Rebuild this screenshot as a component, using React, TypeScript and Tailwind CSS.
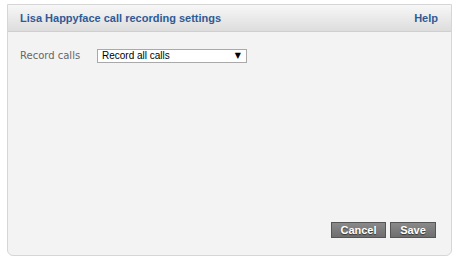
import React from 'react';

const App: React.FC = () => {
  return (
    <div className="w-[459px] h-[263px] bg-white pt-[4px] pl-[7px] font-['DejaVu_Sans',sans-serif]">
      <div className="w-[445px] h-[252px] flex flex-col border border-[#d6d6d6] rounded-b-[6px] bg-[#f3f3f3] overflow-hidden">
        <div className="h-[27px] flex items-center justify-between pl-[12px] pr-[13px] bg-gradient-to-b from-[#f7f7f7] to-[#dddddd] border-b border-[#cfcfcf]">
          <span className="text-[11px] font-bold text-[#2f5a96] font-['Liberation_Sans',sans-serif]">Lisa Happyface call recording settings</span>
          <span className="text-[11px] font-bold text-[#2f5a96] font-['Liberation_Sans',sans-serif]">Help</span>
        </div>
        <div className="flex-1 flex flex-col px-[12px] pt-[16px] pb-[17px]">
          <div className="flex items-center">
            <span className="w-[77px] text-[10px] text-[#666666]">Record calls</span>
            <div className="w-[150px] h-[14px] flex items-center justify-between bg-white border border-[#a9a9a9] pl-[4px] pr-[5px]">
              <span className="text-[10px] text-black leading-none font-['Liberation_Sans',sans-serif]">Record all calls</span>
              <span className="text-[8px] text-black leading-none">▼</span>
            </div>
          </div>
          <div className="mt-auto flex justify-end gap-[4px] pr-[3px]">
            <button className="w-[55px] h-[16px] flex items-center justify-center bg-gradient-to-b from-[#8a8a8a] to-[#6e6e6e] border border-[#555555] text-white text-[11px] font-bold font-['Liberation_Sans',sans-serif] [text-shadow:0_1px_1px_#333]">Cancel</button>
            <button className="w-[46px] h-[16px] flex items-center justify-center bg-gradient-to-b from-[#8a8a8a] to-[#6e6e6e] border border-[#555555] text-white text-[11px] font-bold font-['Liberation_Sans',sans-serif] [text-shadow:0_1px_1px_#333]">Save</button>
          </div>
        </div>
      </div>
    </div>
  );
};

export default App;
